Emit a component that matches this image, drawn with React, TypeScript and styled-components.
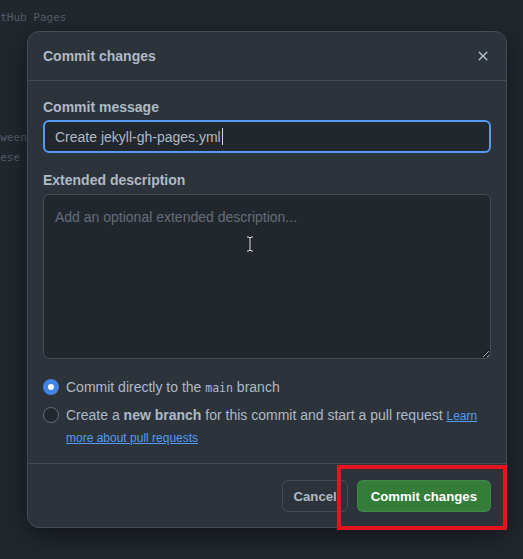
import styled, { createGlobalStyle } from "styled-components";

const GlobalStyle = createGlobalStyle`
  body {
    margin: 0;
    background: #22272e;
    font-family: "Liberation Sans", Arial, sans-serif;
  }
`;

const Page = styled.div`
  position: relative;
  width: 523px;
  height: 559px;
  overflow: hidden;
  background: #22272e;
`;

const CodeBehind = styled.div`
  padding-top: 8px;
  font-family: "DejaVu Sans Mono", monospace;
  font-size: 11px;
  color: #545d68;
  white-space: pre;
`;

const CodeLine = styled.div<{ $shift?: number }>`
  height: 20px;
  line-height: 20px;
  margin-left: ${(p) => -(p.$shift ?? 0)}px;
`;

const Dialog = styled.div`
  position: absolute;
  left: 27px;
  top: 31px;
  width: 480px;
  box-sizing: border-box;
  background: #2d333b;
  border: 1px solid #444c56;
  border-radius: 12px;
  box-shadow: 0 8px 24px rgba(1, 4, 9, 0.5);
  color: #adbac7;
`;

const Header = styled.div`
  height: 48px;
  display: flex;
  align-items: center;
  justify-content: space-between;
  padding: 0 15px;
  border-bottom: 1px solid #444c56;
`;

const Title = styled.h1`
  margin: 0;
  font-size: 14px;
  font-weight: 700;
  color: #adbac7;
`;

const CloseButton = styled.button`
  width: 32px;
  height: 32px;
  margin-right: -8px;
  display: flex;
  align-items: center;
  justify-content: center;
  background: transparent;
  border: none;
  color: #adbac7;
  padding: 0;
`;

const Body = styled.div`
  padding: 16px 15px 15px;
  display: flex;
  flex-direction: column;
  border-bottom: 1px solid #444c56;
`;

const Label = styled.div<{ $top?: number }>`
  font-size: 14px;
  font-weight: 700;
  line-height: 20px;
  margin-top: ${(p) => p.$top ?? 0}px;
  margin-bottom: 3px;
`;

const TextInput = styled.div`
  height: 33px;
  box-sizing: border-box;
  border: 2px solid #539bf5;
  border-radius: 6px;
  background: #22272e;
  padding: 0 10px;
  display: flex;
  align-items: center;
  font-size: 14px;
  color: #adbac7;
`;

const Caret = styled.span`
  display: inline-block;
  width: 1px;
  height: 17px;
  background: #cdd9e5;
  margin-left: 1px;
`;

const TextArea = styled.textarea`
  margin-top: 1px;
  height: 165px;
  box-sizing: border-box;
  border: 1px solid #444c56;
  border-radius: 6px;
  background: #22272e;
  padding: 12px 11px;
  font-family: "Liberation Sans", Arial, sans-serif;
  font-size: 14px;
  line-height: 20px;
  color: #adbac7;
  color-scheme: dark;
  resize: vertical;
  outline: none;

  &::placeholder {
    color: #636e7b;
  }
`;

const Options = styled.div`
  margin-top: 17px;
  display: flex;
  flex-direction: column;
  gap: 6px;
`;

const Option = styled.div`
  display: flex;
  align-items: flex-start;
  gap: 7px;
  font-size: 14px;
  line-height: 22px;
  color: #adbac7;
`;

const Radio = styled.span<{ $checked?: boolean }>`
  flex: none;
  width: 16px;
  height: 16px;
  margin-top: 3px;
  box-sizing: border-box;
  border-radius: 50%;
  background: ${(p) => (p.$checked ? "#fff" : "#22272e")};
  border: ${(p) => (p.$checked ? "5px solid #4184e4" : "1px solid #636e7b")};
`;

const Mono = styled.code`
  font-family: "DejaVu Sans Mono", monospace;
  font-size: 11.5px;
  line-height: 1;
`;

const Link = styled.a`
  color: #539bf5;
  font-size: 12px;
  line-height: 1;
  text-decoration: underline;
`;

const Footer = styled.div`
  padding: 16px 15px 15px;
  display: flex;
  justify-content: flex-end;
  gap: 9px;
`;

const Button = styled.button<{ $primary?: boolean }>`
  height: 32px;
  padding: 0 ${(p) => (p.$primary ? 13 : 10)}px;
  border-radius: 6px;
  font-family: "Liberation Sans", Arial, sans-serif;
  font-size: 13.2px;
  font-weight: 700;
  border: 1px solid ${(p) => (p.$primary ? "rgba(205,217,229,0.1)" : "#444c56")};
  background: ${(p) => (p.$primary ? "#347d39" : "#2d333b")};
  color: ${(p) => (p.$primary ? "#ffffff" : "#adbac7")};
`;

const Highlight = styled.div`
  position: absolute;
  left: 337px;
  top: 465px;
  width: 170px;
  height: 65px;
  box-sizing: border-box;
  border: 4px solid #e5141e;
  pointer-events: none;
`;

const IBeam = styled.svg`
  position: absolute;
  left: 246px;
  top: 236px;
`;

const App = () => {
  return (
    <Page>
      <GlobalStyle />
      <CodeBehind>
        <CodeLine $shift={13}>GitHub Pages</CodeLine>
        <CodeLine />
        <CodeLine />
        <CodeLine />
        <CodeLine />
        <CodeLine />
        <CodeLine $shift={46}>    between these</CodeLine>
        <CodeLine $shift={13}>these workflows</CodeLine>
      </CodeBehind>

      <Dialog>
        <Header>
          <Title>Commit changes</Title>
          <CloseButton aria-label="Close">
            <svg width="16" height="16" viewBox="0 0 16 16" fill="currentColor">
              <path d="M3.72 3.72a.75.75 0 0 1 1.06 0L8 6.94l3.22-3.22a.749.749 0 0 1 1.275.326.749.749 0 0 1-.215.734L9.06 8l3.22 3.22a.749.749 0 0 1-.326 1.275.749.749 0 0 1-.734-.215L8 9.06l-3.22 3.22a.751.751 0 0 1-1.042-.018.751.751 0 0 1-.018-1.042L6.94 8 3.72 4.78a.75.75 0 0 1 0-1.06Z" />
            </svg>
          </CloseButton>
        </Header>

        <Body>
          <Label>Commit message</Label>
          <TextInput>
            Create jekyll-gh-pages.yml
            <Caret />
          </TextInput>

          <Label $top={17}>Extended description</Label>
          <TextArea placeholder="Add an optional extended description..." readOnly />

          <Options>
            <Option>
              <Radio $checked />
              <span>
                Commit directly to the <Mono>main</Mono> branch
              </span>
            </Option>
            <Option>
              <Radio />
              <span>
                Create a <b>new branch</b> for this commit and start a pull request{" "}
                <Link href="#">Learn more about pull requests</Link>
              </span>
            </Option>
          </Options>
        </Body>

        <Footer>
          <Button>Cancel</Button>
          <Button $primary>Commit changes</Button>
        </Footer>
      </Dialog>

      <IBeam width="8" height="16" viewBox="0 0 8 16">
        <path d="M1 1h2l1 1 1-1h2M4 2v12M1 15h2l1-1 1 1h2" stroke="#000" strokeWidth="2.2" fill="none" />
        <path d="M1 1h2l1 1 1-1h2M4 2v12M1 15h2l1-1 1 1h2" stroke="#fff" strokeWidth="1" fill="none" />
      </IBeam>
      <Highlight />
    </Page>
  );
};

export default App;
